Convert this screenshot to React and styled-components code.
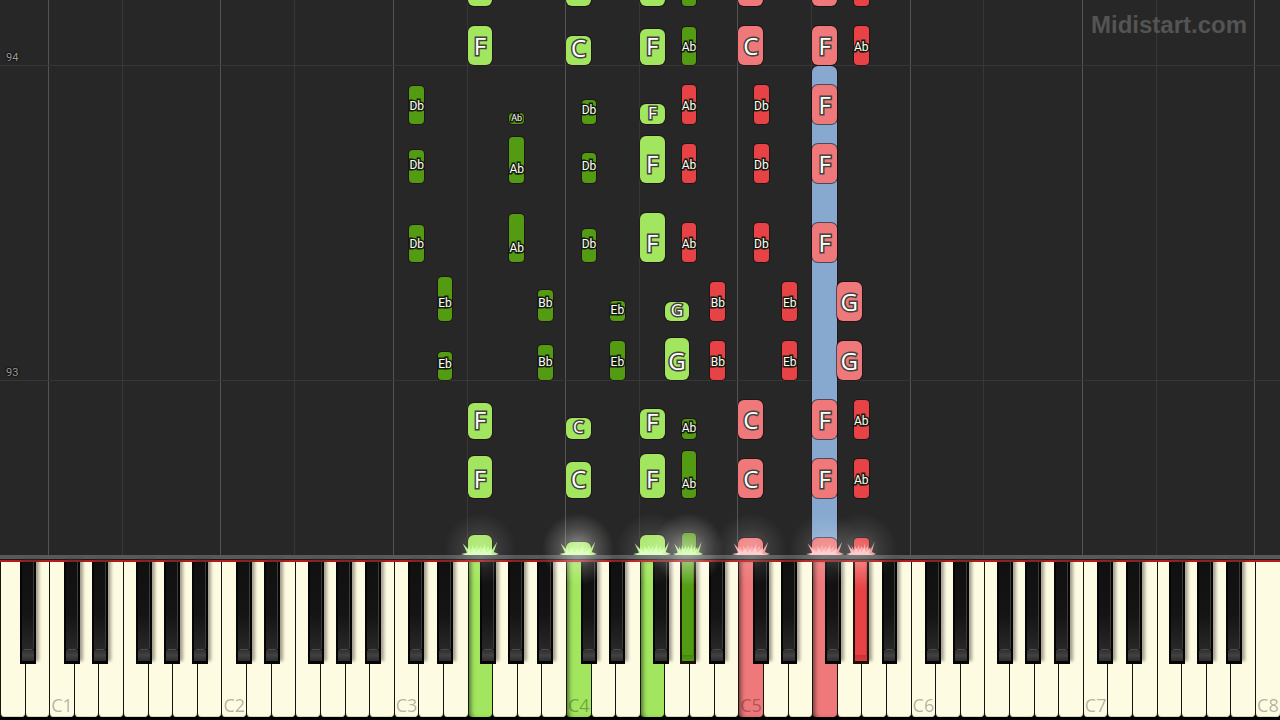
import React from "react";
import styled, { createGlobalStyle } from "styled-components";

const WHITE_COUNT = 52;
const LETTERS = ["A", "B", "C", "D", "E", "F", "G"];

// left edge of each black key, as a share of the white key it starts on
const BLACK_OFFSETS = { C: 59, D: 74, F: 52, G: 65, A: 82 };
const FLAT_NAMES = { C: "Db", D: "Eb", F: "Gb", G: "Ab", A: "Bb" };

const COLORS = {
  green: { white: "#a2e65f", black: "#529b12", spark: "#c9ff9c" },
  red: { white: "#ee787a", black: "#e74346", spark: "#ffb0b0" },
  blue: { white: "#87a9d0" },
};

const KEYS = Array.from({ length: WHITE_COUNT }, (_, index) => {
  const letter = LETTERS[index % 7];
  const octave = Math.floor((index + 5) / 7);
  const hasBlack = BLACK_OFFSETS[letter] !== undefined && index < WHITE_COUNT - 1;
  return { index, letter, octave, hasBlack, flat: hasBlack ? `${FLAT_NAMES[letter]}${octave}` : null };
});

const PRESSED = {
  F3: "green",
  C4: "green",
  F4: "green",
  Ab4: "green",
  C5: "red",
  F5: "red",
  Ab5: "red",
};

// keys whose sparks are at their brightest
const BRIGHT = ["C4", "Ab4"];

// [key, color, distance from the hit line, length]
const NOTES = [
  ["F5", "blue", -10, 499],

  ["F3", "green", -20, 40],
  ["C4", "green", -20, 33],
  ["F4", "green", -20, 40],
  ["Ab4", "green", -20, 42],
  ["C5", "red", -20, 37],
  ["F5", "red", -20, 37],
  ["Ab5", "red", -20, 37],

  ["F3", "green", 57, 42],
  ["C4", "green", 57, 36],
  ["F4", "green", 57, 44],
  ["Ab4", "green", 57, 47],
  ["C5", "red", 57, 39],
  ["F5", "red", 57, 39],
  ["Ab5", "red", 57, 39],

  ["F3", "green", 116, 36],
  ["C4", "green", 116, 21],
  ["F4", "green", 116, 30],
  ["Ab4", "green", 116, 20],
  ["C5", "red", 116, 39],
  ["F5", "red", 116, 39],
  ["Ab5", "red", 116, 39],

  ["Eb3", "green", 175, 28],
  ["Bb3", "green", 175, 35],
  ["Eb4", "green", 175, 39],
  ["G4", "green", 175, 42],
  ["Bb4", "red", 175, 39],
  ["Eb5", "red", 175, 39],
  ["G5", "red", 175, 39],

  ["Eb3", "green", 234, 44],
  ["Bb3", "green", 234, 31],
  ["Eb4", "green", 234, 20],
  ["G4", "green", 234, 19],
  ["Bb4", "red", 234, 39],
  ["Eb5", "red", 234, 39],
  ["G5", "red", 234, 39],

  ["Db3", "green", 293, 37],
  ["Ab3", "green", 293, 48],
  ["Db4", "green", 293, 33],
  ["F4", "green", 293, 49],
  ["Ab4", "red", 293, 39],
  ["Db5", "red", 293, 39],
  ["F5", "red", 293, 39],

  ["Db3", "green", 372, 33],
  ["Ab3", "green", 372, 46],
  ["Db4", "green", 372, 30],
  ["F4", "green", 372, 47],
  ["Ab4", "red", 372, 39],
  ["Db5", "red", 372, 39],
  ["F5", "red", 372, 39],

  ["Db3", "green", 431, 38],
  ["Ab3", "green", 431, 11],
  ["Db4", "green", 431, 24],
  ["F4", "green", 431, 20],
  ["Ab4", "red", 431, 39],
  ["Db5", "red", 431, 39],
  ["F5", "red", 431, 39],

  ["F3", "green", 490, 39],
  ["C4", "green", 490, 29],
  ["F4", "green", 490, 36],
  ["Ab4", "green", 490, 38],
  ["C5", "red", 490, 39],
  ["F5", "red", 490, 39],
  ["Ab5", "red", 490, 39],

  ["F3", "green", 549, 39],
  ["C4", "green", 549, 29],
  ["F4", "green", 549, 36],
  ["Ab4", "green", 549, 38],
  ["C5", "red", 549, 39],
  ["F5", "red", 549, 39],
  ["Ab5", "red", 549, 39],
];

const LABEL_LIMIT = 540;

const MEASURES = [
  { number: 93, offset: 174 },
  { number: 94, offset: 489 },
];

function findKey(name) {
  const black = name.includes("b");
  const key = KEYS.find((el) => (black ? el.flat === name : `${el.letter}${el.octave}` === name));
  const start = key.index + (black ? BLACK_OFFSETS[key.letter] / 100 : 0);
  return { black, start, span: black ? 0.64 : 1 };
}

function Note({ name, color, offset, length }) {
  const { black, start } = findKey(name);
  const labelled = color !== "blue" && offset > 0 && offset < LABEL_LIMIT;

  return (
    <NoteBar $start={start} $black={black} $color={color} $offset={offset} $length={length}>
      {labelled && (
        <NoteLabel $black={black} $small={length < 12} $short={length < 22}>
          {name.slice(0, -1)}
        </NoteLabel>
      )}
    </NoteBar>
  );
}

function Spark({ name, color }) {
  const { start, span } = findKey(name);

  return (
    <SparkArea $center={start + span / 2}>
      <SparkGlow $bright={BRIGHT.includes(name)} />
      <SparkDrawing $black={span < 1} viewBox="0 0 44 18" preserveAspectRatio="none" aria-hidden="true">
        <path
          fill={COLORS[color].spark}
          opacity="0.9"
          d="M0 17 L7 15.5 L2 5 L9 12 L8.5 8 L12 12.5 L13 7 L15.5 11.5 L19 7 L20 11.5 L23 8 L25 11.5 L28 5 L28.5 11.5 L32 8 L33 12 L35.5 9 L36 12 L42 3 L38 14.5 L44 17 L40 18 L4 18 Z"
        />
        <path
          fill="#fff"
          opacity="0.4"
          d="M4 18 L8 14 L6 10 L12 15 L15 10 L18 15 L21 11 L23 15 L27 9 L29 15 L35 12 L34 16 L40 18 Z"
        />
      </SparkDrawing>
    </SparkArea>
  );
}

function Keyboard() {
  return (
    <KeyRow>
      {KEYS.map((el) => {
        const name = `${el.letter}${el.octave}`;
        return (
          <KeySlot key={name}>
            <WhiteKey type="button" aria-label={name} $color={PRESSED[name]}>
              {el.letter === "C" && <OctaveLabel>{name}</OctaveLabel>}
            </WhiteKey>
            {el.hasBlack && (
              <BlackKey
                type="button"
                aria-label={el.flat}
                $offset={BLACK_OFFSETS[el.letter]}
                $color={PRESSED[el.flat]}>
                <BlackKeyTop $color={PRESSED[el.flat]} />
                <BlackKeyFront $color={PRESSED[el.flat]} />
              </BlackKey>
            )}
          </KeySlot>
        );
      })}
    </KeyRow>
  );
}

function App() {
  return (
    <Page>
      <GlobalStyle />
      <Roll>
        <Lanes>
          {KEYS.map((el) => (
            <Lane key={el.index} $letter={el.letter} />
          ))}
        </Lanes>
        {MEASURES.map((el) => (
          <Measure key={el.number} $offset={el.offset}>
            {el.number}
          </Measure>
        ))}
        {NOTES.map(([name, color, offset, length]) => (
          <Note key={`${name}${color}${offset}`} name={name} color={color} offset={offset} length={length} />
        ))}
        <Watermark>Midistart.com</Watermark>
      </Roll>
      <Rail />
      <Keyboard />
      <Sparks>
        {Object.entries(PRESSED).map(([name, color]) => (
          <Spark key={name} name={name} color={color} />
        ))}
      </Sparks>
    </Page>
  );
}

const GlobalStyle = createGlobalStyle`
  * {
    box-sizing: border-box;
  }

  body {
    margin: 0;
    background-color: #000;
    font-family: Roboto, "Liberation Sans", sans-serif;
  }
`;

const Page = styled.main`
  position: relative;
  display: flex;
  flex-direction: column;
  min-height: 100vh;
  overflow: hidden;
`;

const Roll = styled.section`
  position: relative;
  flex: 1;
  overflow: hidden;
  background-color: #272727;
`;

const Lanes = styled.div`
  position: absolute;
  inset: 0 1px 0 -1px;
  display: flex;
`;

const laneLines = { C: "#535353", F: "#373737" };

const Lane = styled.div`
  flex: 1;
  border-left: 1px solid ${({ $letter }) => laneLines[$letter] || "transparent"};
`;

const Measure = styled.div`
  position: absolute;
  left: 0;
  right: 0;
  bottom: ${({ $offset }) => $offset}px;
  padding-left: 6px;
  border-bottom: 1px solid #373737;
  color: #9a9a9a;
  font-size: 11px;
  line-height: 14px;
  text-shadow: 0 0 2px #000, 0 0 2px #000;
`;

const NoteBar = styled.div`
  position: absolute;
  left: calc(100% * ${({ $start }) => $start / WHITE_COUNT});
  bottom: ${({ $offset }) => $offset}px;
  display: flex;
  align-items: flex-end;
  justify-content: center;
  width: calc(100% * ${({ $black }) => ($black ? 0.6 : 1) / WHITE_COUNT});
  height: ${({ $length }) => $length}px;
  margin-left: ${({ $black }) => ($black ? 1 : 0)}px;
  padding-bottom: ${({ $length, $black }) =>
    $black && $length > 45 ? 8 : Math.round(Math.min($black ? 18 : 19, $length * 0.57)) - 6}px;
  border-radius: ${({ $black }) => ($black ? 4 : 6)}px;
  background-color: ${({ $color, $black }) => COLORS[$color][$black ? "black" : "white"]};
  box-shadow: 0 0 0 1px rgba(30, 10, 14, 0.6);
`;

const labelSize = ({ $black, $small, $short }) => {
  if ($black) return $small ? 9 : 12;
  return $short ? 17 : 24;
};

const NoteLabel = styled.span`
  color: #fff;
  font-family: ${({ $black }) => ($black ? "Roboto" : '"Open Sans"')}, "Liberation Sans", sans-serif;
  font-size: ${labelSize}px;
  font-weight: ${({ $black, $short }) => ($black || $short ? 400 : 500)};
  line-height: 12px;
  -webkit-text-stroke: 3px ${({ $black }) => ($black ? "#141a0c" : "#41403a")};
  paint-order: stroke fill;
`;

const Watermark = styled.div`
  position: absolute;
  top: 11px;
  right: 33px;
  color: #545454;
  font-family: "Liberation Sans", Arial, sans-serif;
  font-size: 24px;
  font-weight: 700;
  line-height: 28px;
`;

const Rail = styled.div`
  height: 7px;
  border-top: 4px solid #58595b;
  border-bottom: 2px solid #b51a1c;
  background-color: #1b1b1b;
`;

const KeyRow = styled.section`
  display: flex;
  height: 158px;
  padding-bottom: 3px;
  background-color: #000;
`;

const KeySlot = styled.div`
  position: relative;
  display: flex;
  flex: 1;
  min-width: 0;
`;

const WhiteKey = styled.button`
  display: flex;
  flex: 1;
  align-items: flex-end;
  min-width: 0;
  padding: 0 0 0 1px;
  border: none;
  border-left: 1px solid #16160f;
  border-radius: 0 0 4px 4px;
  background-color: ${({ $color }) => ($color ? COLORS[$color].white : "#fdfbe2")};
  box-shadow: ${({ $color }) => ($color ? "inset 4px 0 4px -2px rgba(0, 0, 0, 0.5)" : "inset 0 -1px 0 #d8d6c0")};
`;

const OctaveLabel = styled.span`
  color: rgba(0, 0, 0, 0.3);
  font-family: "Open Sans", "Noto Sans", sans-serif;
  font-size: 18px;
  line-height: 23px;
`;

const BlackKey = styled.button`
  position: absolute;
  z-index: 1;
  top: 0;
  left: ${({ $offset }) => $offset}%;
  display: flex;
  flex-direction: column;
  width: 65%;
  height: 102px;
  padding: 0 2px 3px;
  border: none;
  background-color: ${({ $color }) => ($color ? "#1d120a" : "#050505")};
  box-shadow: 3px -3px 3px rgba(60, 50, 40, 0.45);
`;

const blackTops = {
  green: "linear-gradient(#6fae35, #529b12 30%, #529b12)",
  red: "linear-gradient(#f2696b, #e74346 30%, #e74346)",
};

const BlackKeyTop = styled.span`
  flex: 1;
  border-right: 1px solid ${({ $color }) => ($color ? "rgba(0, 0, 0, 0.15)" : "#3c3c3c")};
  background: ${({ $color }) => blackTops[$color] || "linear-gradient(#101010, #141414 60%, #272727)"};
`;

const blackFronts = {
  green: "linear-gradient(#448610, #529b12)",
  red: "linear-gradient(#c93235, #d93c3f)",
};

const BlackKeyFront = styled.span`
  height: ${({ $color }) => ($color ? 6 : 12)}px;
  border-top: ${({ $color }) => ($color ? "none" : "1px solid #4a4a4a")};
  border-radius: ${({ $color }) => ($color ? "0" : "3px 3px 0 0")};
  background: ${({ $color }) => blackFronts[$color] || "linear-gradient(#303030, #414141 50%, #2c2c2c)"};
`;

const Sparks = styled.div`
  position: absolute;
  z-index: 2;
  right: 0;
  bottom: 165px;
  left: 0;
  height: 0;
  pointer-events: none;
`;

const SparkArea = styled.div`
  position: absolute;
  bottom: 0;
  left: calc(100% * ${({ $center }) => $center / WHITE_COUNT});
  display: flex;
  align-items: flex-end;
  justify-content: center;
  width: 0;
`;

const SparkGlow = styled.div`
  position: absolute;
  bottom: -30px;
  width: 72px;
  height: 72px;
  background: radial-gradient(
    closest-side,
    rgba(255, 255, 250, ${({ $bright }) => ($bright ? 0.5 : 0.24)}),
    rgba(255, 255, 250, ${({ $bright }) => ($bright ? 0.18 : 0.08)}) 55%,
    transparent
  );
`;

const SparkDrawing = styled.svg`
  position: relative;
  flex: none;
  width: ${({ $black }) => ($black ? 30 : 38)}px;
  height: 16px;
`;

export default App;
